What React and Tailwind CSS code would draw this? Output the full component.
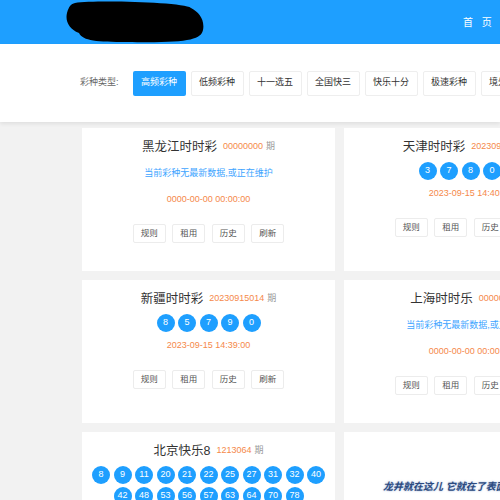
import React from 'react';

const tabs = ['高频彩种', '低频彩种', '十一选五', '全国快三', '快乐十分', '极速彩种', '境外彩种'];

const lotteries = [
  { name: '黑龙江时时彩', issue: '00000000', balls: [], date: '0000-00-00 00:00:00' },
  { name: '天津时时彩', issue: '20230915042', balls: ['3', '7', '8', '0', '4'], date: '2023-09-15 14:40:00' },
  { name: '新疆时时彩', issue: '20230915014', balls: ['8', '5', '7', '9', '0'], date: '2023-09-15 14:39:00' },
  { name: '上海时时乐', issue: '00000000', balls: [], date: '0000-00-00 00:00:00' },
  {
    name: '北京快乐8',
    issue: '1213064',
    balls: ['8', '9', '11', '20', '21', '22', '25', '27', '31', '32', '40', '42', '48', '53', '56', '57', '63', '64', '70', '78'],
    date: '2023-09-15 14:35:00',
  },
];

const LotteryCard = ({ item }) => {
  return (
    <div className="h-[143px] bg-white pt-[10px] px-[8px] flex flex-col items-center">
      {/* title line */}
      <div className="h-[18px] flex items-center whitespace-nowrap">
        <span className="text-[12.5px] text-[#333]">{item.name}</span>
        <span className="ml-[6px] text-[9px] text-[#f5894a]">{item.issue}</span>
        <span className="ml-[3px] text-[9px] text-[#999]">期</span>
      </div>

      {item.balls.length > 0 ? (
        <div className="mt-[6px] flex flex-wrap justify-center gap-x-[3.5px] gap-y-[3px]">
          {item.balls.map((b, i) => (
            <span
              key={i}
              className="w-[18px] h-[18px] rounded-full bg-[#1e9fff] text-white text-[9px] flex items-center justify-center"
            >
              {b}
            </span>
          ))}
        </div>
      ) : (
        <div className="mt-[6px] h-[24px] flex items-center text-[9px] text-[#3da4ff] whitespace-nowrap">
          当前彩种无最新数据,或正在维护
        </div>
      )}

      <div className="mt-[7px] h-[14px] flex items-center text-[9px] text-[#f5894a] whitespace-nowrap">{item.date}</div>

      <div className="mt-[17px] flex gap-[6.5px]">
        {['规则', '租用', '历史', '刷新'].map((t) => (
          <button
            key={t}
            className="w-[33px] h-[19px] border border-[#ececec] rounded-[2px] bg-white text-[8.5px] text-[#555] flex items-center justify-center"
          >
            {t}
          </button>
        ))}
      </div>
    </div>
  );
};

const App = () => {
  return (
    <div className="relative w-[500px] h-[500px] overflow-hidden bg-[#f2f2f2] font-['Liberation_Sans','Noto_Sans_CJK_SC',sans-serif]">
      {/* header */}
      <div className="h-[44px] bg-[#1e9fff] flex items-center pl-[65px] whitespace-nowrap">
        <svg width="140" height="42" viewBox="0 0 140 42" className="shrink-0">
          <path
            d="M10,2 C30,-1 118,1 126,7 C134,11 140,19 138,29 C136,39 122,42 62,41 C32,41 18,40 14,32 C4,28 0,20 2,12 C4,5 6,3 10,2 Z"
            fill="#000"
          />
        </svg>
        <span className="ml-[258px] text-[10px] text-white tracking-[3px]">首 页</span>
      </div>

      {/* filter bar */}
      <div className="h-[78px] bg-white flex items-center pl-[80px] whitespace-nowrap shadow-[0_2px_4px_rgba(0,0,0,0.08)] relative">
        <span className="text-[9px] text-[#666]">彩种类型:</span>
        <div className="ml-[14px] flex gap-[5px]">
          {tabs.map((t, i) => (
            <button
              key={t}
              className={
                i === 0
                  ? 'w-[53px] h-[25px] shrink-0 rounded-[2px] bg-[#1e9fff] text-white text-[9px]'
                  : 'w-[53px] h-[25px] shrink-0 rounded-[2px] bg-white border border-[#eeeeee] text-[#333] text-[9px]'
              }
            >
              {t}
            </button>
          ))}
        </div>
      </div>

      {/* cards */}
      <div className="pl-[82px] pt-[6px] grid grid-cols-[253px_253px] gap-[9px]">
        {lotteries.map((item) => (
          <LotteryCard key={item.name} item={item} />
        ))}
        <div className="h-[143px] bg-white"></div>
      </div>

      {/* floating notice */}
      <div className="absolute left-[383px] top-[479px] whitespace-nowrap text-[10px] font-bold italic text-[#2c4a80] [text-shadow:0_0_2px_rgba(120,150,200,0.8)]">
        龙井就在这儿 它就在了表面
      </div>
    </div>
  );
};

export default App;
